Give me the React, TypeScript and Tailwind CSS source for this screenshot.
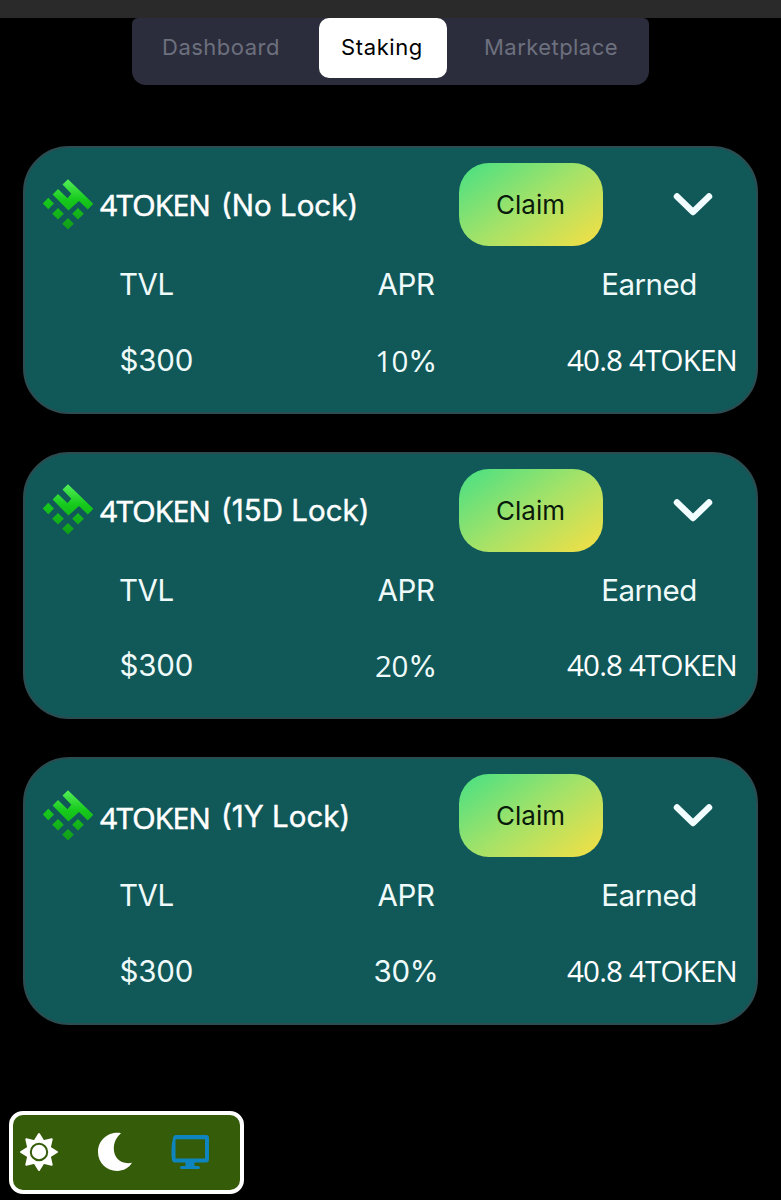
import React, { useState } from 'react';
import clsx from 'clsx';

interface Pool {
  id: string;
  lock: string;
  tvl: string;
  apr: string;
  altDigits: boolean;
  earned: string;
  nameOffset: string;
}

const TABS = [
  { label: 'Dashboard', className: 'w-[179px] pr-px tracking-[0.5px]' },
  { label: 'Staking', className: 'w-[128px] pr-[2px] rounded-[10px] tracking-[0.6px]' },
  { label: 'Marketplace', className: 'w-[209px] pr-px tracking-[0.45px]' },
];

const POOLS: Pool[] = [
  { id: 'none', lock: '(No Lock)', tvl: '$300', apr: '10', altDigits: true, earned: '40.8 4TOKEN', nameOffset: 'pt-1' },
  { id: '15d', lock: '(15D Lock)', tvl: '$300', apr: '20', altDigits: true, earned: '40.8 4TOKEN', nameOffset: 'pt-[5px]' },
  { id: '1y', lock: '(1Y Lock)', tvl: '$300', apr: '30', altDigits: false, earned: '40.8 4TOKEN', nameOffset: 'pt-1.5' },
];

const TokenLogo: React.FC = () => (
  <svg width="52" height="52" viewBox="0 0 52 52" className="shrink-0">
    <defs>
      <linearGradient id="tokenGreen" x1="0" y1="0" x2="0" y2="52" gradientUnits="userSpaceOnUse">
        <stop offset="0" stopColor="#55f05a" />
        <stop offset="0.4" stopColor="#16c91b" />
        <stop offset="1" stopColor="#109a18" />
      </linearGradient>
    </defs>
    <g fill="url(#tokenGreen)">
      <path d="M25 .2 50.300 24.8 44.800 30.500 36 22 25.400 31.500 9.600 15.500 15 10 24.500 19.300 28.300 14.800 19.500 5.500Z" />
      <path d="M5.300 18.800 11 24.500 5.300 30.200 -.3 24.500Z" />
      <path d="M15 29 20.800 34.700 15 40.400 9.200 34.700Z" />
      <path d="M35 29 40.800 34.700 35 40.400 29.200 34.700Z" />
      <path d="M25 39 30.800 44.700 25 50.400 19.200 44.700Z" />
    </g>
  </svg>
);

const SunIcon: React.FC = () => (
  <svg width="40" height="40" viewBox="0 0 40 40">
    <path
      d="M20 2 24.500 9.200 32.700 7.300 30.800 15.500 38 20 30.800 24.500 32.700 32.700 24.500 30.800 20 38 15.500 30.800 7.300 32.700 9.200 24.500 2 20 9.200 15.500 7.300 7.300 15.500 9.200Z"
      fill="#fff"
      stroke="#fff"
      strokeWidth="2"
      strokeLinejoin="round"
    />
    <circle cx="20" cy="20" r="8.2" fill="#fff" stroke="#355c08" strokeWidth="2" />
  </svg>
);

const MoonIcon: React.FC = () => (
  <svg width="40" height="40" viewBox="0 0 40 40">
    <path
      d="M26 1.200C15 -.9 3 7 3 20c0 10.700 8.500 19 19 19 6.500 0 12-3.200 15-8.200-12 2-18.200-5.500-18.200-14.300 0-6.300 3-11.800 7.200-15.300Z"
      fill="#fff"
    />
  </svg>
);

const MonitorIcon: React.FC = () => (
  <svg width="40" height="36" viewBox="0 0 40 36">
    <path
      fillRule="evenodd"
      d="M6 1h30q3 0 3 3v21.500q0 3-3 3H24.500V32H28q2 0 2 1.500T28 35H12q-2 0-2-1.500T12 32h3.500v-3.500H4.500q-2 0-2.500-2.500-1.500-11 1-22 .6-3 3-3ZM5.500 5.200V24.500h29.500V5.200Z"
      fill="#0f85c0"
    />
  </svg>
);

const PoolCard: React.FC<{ pool: Pool }> = ({ pool }) => (
  <section className="h-[267.500px] w-[735px] shrink-0 rounded-[46px] border-2 border-[#2b4c50] bg-[#115859] text-white">
    <div className="flex h-[98px] items-end pl-[18px]">
      <div className="flex h-[83px] w-[416px] shrink-0 items-center">
        <TokenLogo />
        <h2 className="flex h-[50px] items-start pl-[5px] leading-[42px]">
          <span
            className={clsx(
              "w-[121px] whitespace-nowrap font-['Open_Sans'] text-[30px] font-normal tracking-[-0.75px] [-webkit-text-stroke:0.6px_#fff]",
              pool.nameOffset
            )}
          >
            4TOKEN
          </span>
          <span className="whitespace-nowrap pt-1 font-['Inter'] text-[29.5px] font-normal [-webkit-text-stroke:0.4px_#fff]">
            {pool.lock}
          </span>
        </h2>
      </div>
      <button className="h-[83px] w-[144px] shrink-0 rounded-[30px] bg-[linear-gradient(145deg,#45e084_0%,#a5e268_50%,#f7df43_100%)] pr-px font-['Inter'] text-[26px] text-[#091a0c]">
        Claim
      </button>
      <button className="flex h-[83px] w-[179px] shrink-0 items-center justify-center pt-px" aria-label="Expand">
        <svg width="40" height="26" viewBox="0 0 40 26" fill="none">
          <path d="M4 4.500 20 20 36 4.500" stroke="#f1fdff" strokeWidth="6.500" strokeLinecap="round" strokeLinejoin="round" />
        </svg>
      </button>
    </div>

    <div className="grid grid-cols-[247px_268px_218px] pt-px font-['Inter'] text-[29.5px] leading-[75.500px] tracking-[-0.2px] text-[#effbfa]">
      <span className="pl-[94px] tracking-[-0.5px]">TVL</span>
      <span className="text-center tracking-[-0.4px]">APR</span>
      <span className="text-center tracking-[-0.5px]">Earned</span>
      <span className="pl-[94.500px]">{pool.tvl}</span>
      <span className="text-center">
        <span className={clsx(pool.altDigits && "font-['Open_Sans']")}>{pool.apr}</span>%
      </span>
      <span className="-mt-px whitespace-nowrap pl-[6px] text-center font-['Open_Sans'] tracking-[-0.8px] text-white">{pool.earned}</span>
    </div>
  </section>
);

const App: React.FC = () => {
  const [tab, setTab] = useState('Staking');

  return (
    <div className="flex h-[1200px] w-[781px] flex-col overflow-hidden bg-black">
      <div className="h-[18px] shrink-0 bg-[#2a2a2a]" />

      <nav className="mx-auto flex h-[67px] w-[517px] shrink-0 rounded-b-[14px] rounded-t-[6px] bg-[#2b2d3c] font-['Inter'] text-[22px]">
        {TABS.map((t) => (
          <button
            key={t.label}
            onClick={() => setTab(t.label)}
            className={clsx(
              'h-[60px] shrink-0 pb-px',
              t.className,
              t.label === 'Staking' && 'ml-2',
              tab === t.label ? 'bg-white text-black' : 'text-[#6d707e]'
            )}
          >
            {t.label}
          </button>
        ))}
      </nav>

      <main className="mt-[61px] flex flex-col gap-[38.200px] pl-[23px]">
        {POOLS.map((pool) => (
          <PoolCard key={pool.id} pool={pool} />
        ))}
      </main>

      {/* Theme switcher */}
      <footer className="ml-[9px] mt-[86px] flex h-[83px] w-[235px] shrink-0 items-center rounded-[14px] border-4 border-white bg-[#355c08] pl-1.5">
        <button aria-label="Light"><SunIcon /></button>
        <button className="ml-9" aria-label="Dark"><MoonIcon /></button>
        <button className="ml-[35px]" aria-label="System"><MonitorIcon /></button>
      </footer>
    </div>
  );
};

export default App;
